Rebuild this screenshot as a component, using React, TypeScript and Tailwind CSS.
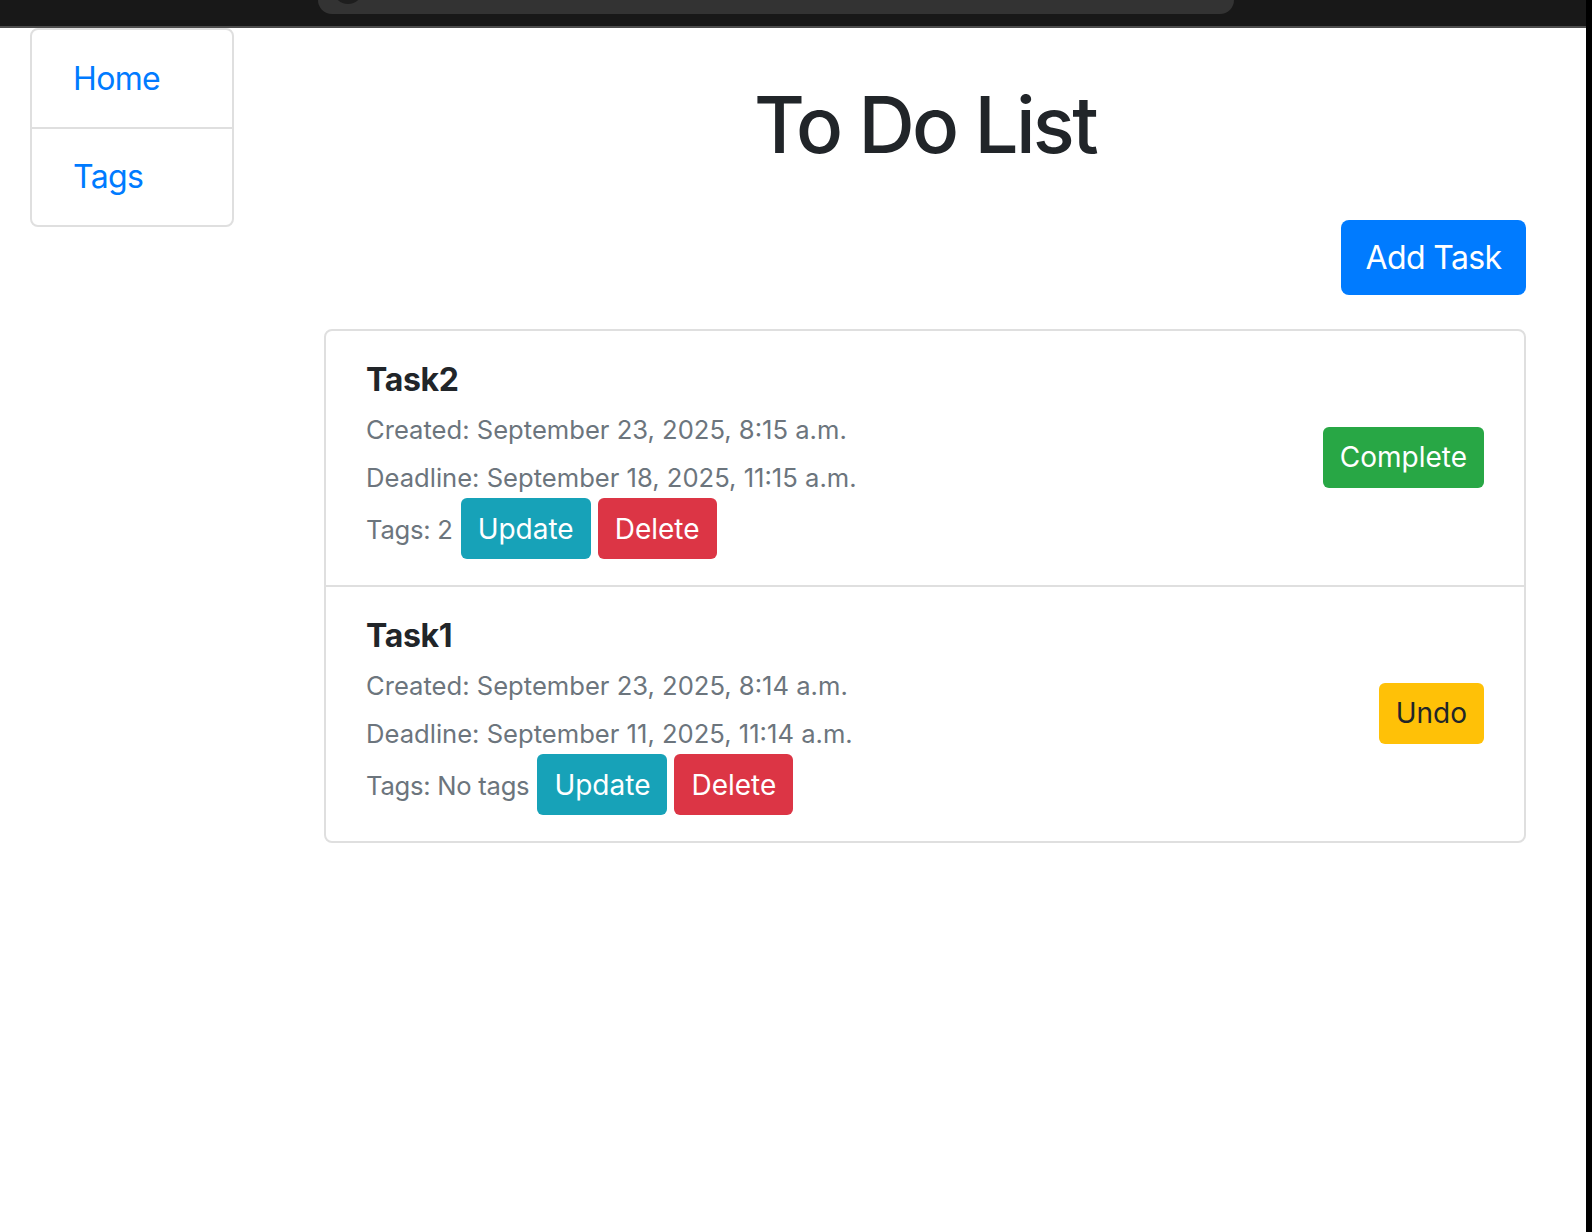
import React from "react";

const font = { fontFamily: "Inter, 'Noto Sans', sans-serif" };

function SmBtn({ label, kind }: { label: string; kind: "info" | "danger" | "success" | "warning" }) {
  const cls =
    kind === "info"
      ? "bg-[#17a2b8] text-white"
      : kind === "danger"
      ? "bg-[#dc3545] text-white"
      : kind === "success"
      ? "bg-[#28a745] text-white"
      : "bg-[#ffc107] text-[#212529]";
  return (
    <button className={`h-[61px] px-[17px] rounded-[6px] text-[28px] leading-none flex items-center ${cls}`}>
      {label}
    </button>
  );
}

function TaskItem({
  title,
  created,
  deadline,
  tags,
  done,
  first,
}: {
  title: string;
  created: string;
  deadline: string;
  tags: string;
  done: boolean;
  first: boolean;
}) {
  return (
    <div className={`flex items-center justify-between px-[40px] pt-[29px] pb-[26px] ${first ? "" : "border-t-2 border-[#dfdfdf]"}`}>
      <div className="flex flex-col">
        <div className="text-[32px] leading-[40px] font-bold text-[#212529] tracking-[-0.01em]">{title}</div>
        <div className="mt-[12px] text-[25.6px] leading-[36px] text-[#6c757d]">Created: {created}</div>
        <div className="mt-[12px] text-[25.6px] leading-[36px] text-[#6c757d]">Deadline: {deadline}</div>
        <div className="mt-[2px] flex items-baseline">
          <span className="text-[25.6px] text-[#6c757d] tracking-[-0.01em] mr-[8px]">Tags: {tags}</span>
          <SmBtn label="Update" kind="info" />
          <span className="w-[7px]" />
          <SmBtn label="Delete" kind="danger" />
        </div>
      </div>
      <div className="mb-[5px]">
        {done ? <SmBtn label="Undo" kind="warning" /> : <SmBtn label="Complete" kind="success" />}
      </div>
    </div>
  );
}

export default function App() {
  return (
    <div className="w-[1592px] h-[1232px] flex bg-white overflow-hidden" style={font}>
      <div className="flex-1 flex flex-col min-w-0">
        <div className="relative h-[26px] bg-[#181818] border-b-2 border-[#4d4d4d] box-content">
          <div className="absolute left-[318px] top-0 w-[916px] h-[14px] bg-[#333333] rounded-b-[14px] overflow-hidden">
            <div className="absolute left-[15px] -top-[26px] w-[30px] h-[30px] rounded-full bg-[#1e1e1e]" />
          </div>
        </div>
        <div className="flex items-start">
          <div className="ml-[30px] w-[204px] border-2 border-[#dfdfdf] rounded-[8px] flex flex-col">
            <div className="h-[97px] px-[41px] flex items-center text-[32px] text-[#007bff] tracking-[-0.02em]">Home</div>
            <div className="h-[98px] px-[41px] flex items-center text-[32px] text-[#007bff] tracking-[-0.02em] border-t-2 border-[#dfdfdf]">Tags</div>
          </div>
          <div className="ml-[90px] w-[1202px] flex flex-col">
            <h1 className="mt-[49px] text-center text-[78px] leading-[96px] font-medium text-[#212529] tracking-[-0.035em]">To Do List</h1>
            <div className="mt-[47px] flex justify-end">
              <button className="w-[185px] h-[75px] rounded-[8px] bg-[#007bff] text-white text-[32px] tracking-[-0.02em]">Add Task</button>
            </div>
            <div className="mt-[34px] border-2 border-[#dfdfdf] rounded-[8px]">
              <TaskItem
                first
                title="Task2"
                created="September 23, 2025, 8:15 a.m."
                deadline="September 18, 2025, 11:15 a.m."
                tags="2"
                done={false}
              />
              <TaskItem
                first={false}
                title="Task1"
                created="September 23, 2025, 8:14 a.m."
                deadline="September 11, 2025, 11:14 a.m."
                tags="No tags"
                done={true}
              />
            </div>
          </div>
        </div>
      </div>
      <div className="w-[6px] bg-black" />
    </div>
  );
}
